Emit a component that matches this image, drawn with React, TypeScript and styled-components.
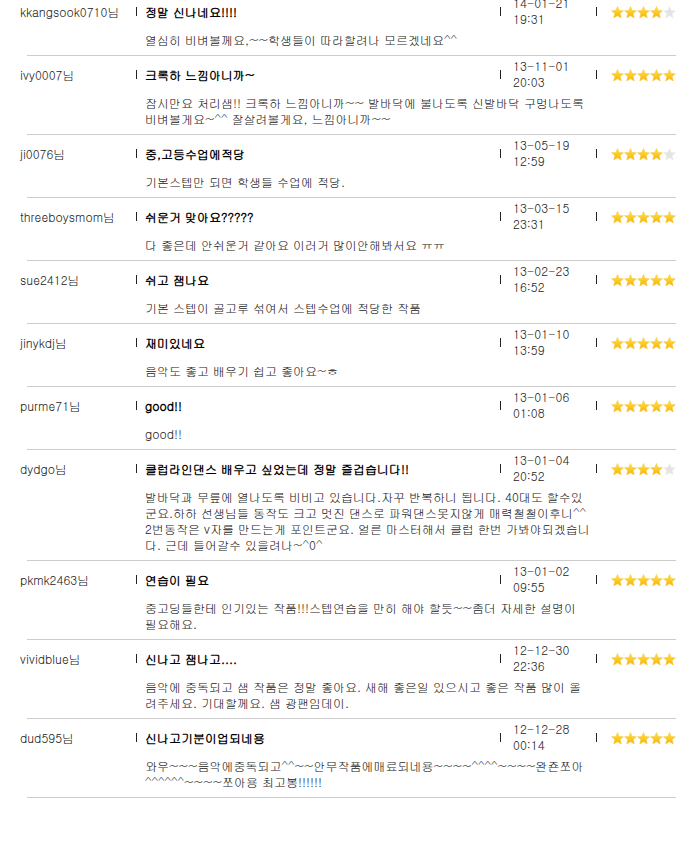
import React from 'react';
import styled, { createGlobalStyle } from 'styled-components';

const GlobalStyle = createGlobalStyle`
  html, body {
    margin: 0;
    padding: 0;
    background: #fff;
  }
  body {
    font-family: Gulim, "Noto Sans CJK KR", "Liberation Sans", sans-serif;
    font-size: 12px;
    color: #222;
  }
`;

type Review = {
  user: string;
  title: string;
  date: string;
  time: string;
  rating: number;
  body: string;
};

const reviews: Review[] = [
  { user: 'kkangsook0710님', title: '정말 신나네요!!!!', date: '14-01-21', time: '19:31', rating: 4, body: '열심히 비벼볼께요,~~학생들이 따라할려나 모르겠네요^^' },
  { user: 'ivy0007님', title: '크록하 느낌아니까~', date: '13-11-01', time: '20:03', rating: 5, body: '잠시만요 처리샘!! 크록하 느낌아니까~~ 발바닥에 불나도록 신발바닥 구멍나도록 비벼볼게요~^^ 잘살려볼게요, 느낌아니까~~' },
  { user: 'ji0076님', title: '중,고등수업에적당', date: '13-05-19', time: '12:59', rating: 4, body: '기본스텝만 되면 학생들 수업에 적당.' },
  { user: 'threeboysmom님', title: '쉬운거 맞아요?????', date: '13-03-15', time: '23:31', rating: 5, body: '다 좋은데 안쉬운거 같아요 이러거 많이안해봐서요 ㅠㅠ' },
  { user: 'sue2412님', title: '쉬고 잼나요', date: '13-02-23', time: '16:52', rating: 5, body: '기본 스텝이 골고루 섞여서 스텝수업에 적당한 작품' },
  { user: 'jinykdj님', title: '재미있네요', date: '13-01-10', time: '13:59', rating: 5, body: '음악도 좋고 배우기 쉽고 좋아요~ㅎ' },
  { user: 'purme71님', title: 'good!!', date: '13-01-06', time: '01:08', rating: 5, body: 'good!!' },
  { user: 'dydgo님', title: '클럽라인댄스 배우고 싶었는데 정말 즐겁습니다!!', date: '13-01-04', time: '20:52', rating: 4, body: '발바닥과 무릎에 열나도록 비비고 있습니다.자꾸 반복하니 됩니다. 40대도 할수있군요.하하 선생님들 동작도 크고 멋진 댄스로 파워댄스못지않게 매력철철이후니^^ 2번동작은 v자를 만드는게 포인트군요. 얼른 마스터해서 클럽 한번 가봐야되겠습니다. 근데 들어갈수 있을려나~^0^' },
  { user: 'pkmk2463님', title: '연습이 필요', date: '13-01-02', time: '09:55', rating: 5, body: '중고딩들한테 인기있는 작품!!!스텝연습을 만히 해야 할듯~~좀더 자세한 설명이 필요해요.' },
  { user: 'vividblue님', title: '신나고 잼나고....', date: '12-12-30', time: '22:36', rating: 5, body: '음악에 중독되고 샘 작품은 정말 좋아요. 새해 좋은일 있으시고 좋은 작품 많이 올려주세요. 기대할께요. 샘 광팬임데이.' },
  { user: 'dud595님', title: '신나고기분이업되네용', date: '12-12-28', time: '00:14', rating: 5, body: '와우~~~음악에중독되고^^~~안무작품에매료되네용~~~~^^^^~~~~완죤쪼아^^^^^^~~~~쪼아용 최고봉!!!!!!' },
];

// list is scrolled a bit, first row is cut at the top
const List = styled.div`
  margin-top: -7px;
  padding-bottom: 40px;
`;

const Item = styled.div`
  padding: 2px 0 7px 20px;
`;

const Head = styled.div`
  display: grid;
  grid-template-columns: 116px 364px 96px 80px;
  align-items: center;
  height: 32px;
`;

const Name = styled.div`
  white-space: nowrap;
`;

const Cell = styled.div<{ $gap: number }>`
  display: flex;
  align-items: center;
  gap: ${p => p.$gap}px;
`;

const Bar = styled.span`
  flex: none;
  width: 1px;
  height: 9px;
  background: #222;
`;

const Title = styled.strong`
  font-weight: bold;
  color: #000;
  white-space: nowrap;
`;

const DateText = styled.div`
  line-height: 16px;
`;

const Stars = styled.div`
  display: flex;
  margin-top: 2px;
`;

const Body = styled.p`
  margin: 5px 0 0;
  padding-left: 125px;
  width: 445px;
  line-height: 16px;
`;

const Rule = styled.div`
  margin-left: 27px;
  width: 649px;
  border-top: 1px solid #ccc;
`;

const Star: React.FC<{ on: boolean; id: string }> = ({ on, id }) => (
  <svg width="13" height="13" viewBox="0 0 24 24">
    <defs>
      <linearGradient id={id} x1="0" y1="0" x2="0" y2="1">
        <stop offset="0" stopColor="#ffe44d" />
        <stop offset="1" stopColor="#f7b300" />
      </linearGradient>
    </defs>
    <polygon
      points="12,1 15.2,8.3 23,8.9 17,14 18.9,22 12,17.8 5.1,22 7,14 1,8.9 8.8,8.3"
      fill={on ? `url(#${id})` : '#e4e4e4'}
      stroke={on ? '#f5c542' : '#ececec'}
      strokeWidth="1"
      strokeLinejoin="round"
    />
  </svg>
);

const Rating: React.FC<{ value: number; idx: number }> = ({ value, idx }) => (
  <Stars>
    {[0, 1, 2, 3, 4].map(i => (
      <Star key={i} on={i < value} id={`g${idx}-${i}`} />
    ))}
  </Stars>
);

const App: React.FC = () => (
  <>
    <GlobalStyle />
    <List>
      {reviews.map((r, i) => (
        <React.Fragment key={r.user}>
          <Item>
            <Head>
              <Name>{r.user}</Name>
              <Cell $gap={8}>
                <Bar />
                <Title>{r.title}</Title>
              </Cell>
              <Cell $gap={12}>
                <Bar />
                <DateText>
                  {r.date}
                  <br />
                  {r.time}
                </DateText>
              </Cell>
              <Cell $gap={14}>
                <Bar />
                <Rating value={r.rating} idx={i} />
              </Cell>
            </Head>
            <Body>{r.body}</Body>
          </Item>
          <Rule />
        </React.Fragment>
      ))}
    </List>
  </>
);

export default App;
